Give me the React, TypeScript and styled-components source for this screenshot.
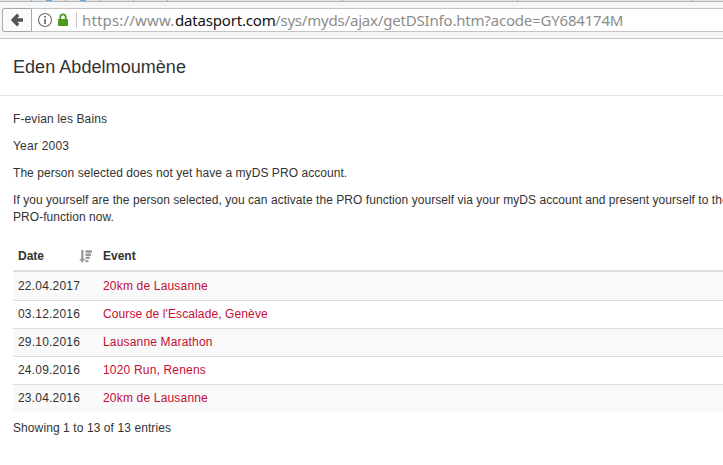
import React from "react";
import styled, { createGlobalStyle } from "styled-components";

const GlobalStyle = createGlobalStyle`
  * { box-sizing: border-box; }
  html, body { margin: 0; overflow: hidden; background: #fff; }
  body { font: 12px/17px "Liberation Sans", Arial, sans-serif; color: #333; }
`;
const Window = styled.div`width: 723px; height: 465px; overflow: hidden;`;
const TabStrip = styled.div`
  display: flex; height: 2px; background: #e3e4e5; border-bottom: 1px solid #b3b4b6;
`;
const Tab = styled.div<{ $w: number }>`
  flex: none; width: ${p => p.$w}px; height: 1px; border-right: 1px solid #aaa;
`;
const Favicon = styled.div`width: 6px; height: 1px; margin-left: 14px; background: #5ba7de;`;
const Toolbar = styled.div`
  height: 37px; padding: 6px 0 6px 2px; display: flex; background: #f5f6f7; border-bottom: 1px solid #c8c8c8;
`;
const BackButton = styled.button`
  width: 30px; height: 24px; padding: 0; display: flex; align-items: center; justify-content: center;
  background: #fbfbfb; border: 1px solid #a9a9a9; border-radius: 2px 0 0 2px;
`;
const AddressBar = styled.div`
  flex: 1; height: 24px; display: flex; align-items: center; padding-left: 5px;
  background: #fff; border: solid #c4c4c4; border-width: 1px 0;
`;
const Lock = styled.svg`margin-left: 4px;`;
const Separator = styled.div`width: 1px; height: 16px; margin: 0 5px 0 7px; background: #c8c8c8;`;
const UrlPart = styled.span<{ $w: number; $ls: number; $host?: boolean }>`
  flex: none; width: ${p => p.$w}px; white-space: nowrap;
  font: 15px/20px "Noto Sans", sans-serif; letter-spacing: ${p => p.$ls}px;
  color: ${p => (p.$host ? "#111" : "#8c8c8c")};
`;
const Header = styled.header`height: 57px; padding: 16px 13px 15px; border-bottom: 1px solid #e5e5e5;`;
const Title = styled.h4`margin: 0; font-size: 18px; font-weight: 400; line-height: 25px; letter-spacing: 0.05px;`;
const Content = styled.main`padding: 15px 0 0 13px;`;
const Paragraph = styled.p<{ $ls?: number }>`
  margin: 0 0 10px; white-space: nowrap; letter-spacing: ${p => p.$ls ?? 0.05}px;
`;
const Table = styled.table`width: 740px; margin-top: 15px; border-collapse: separate; border-spacing: 0; table-layout: fixed;`;
const HeadCell = styled.th<{ $w?: number }>`
  width: ${p => (p.$w ? `${p.$w}px` : "auto")}; height: 31px; padding: 1px 5px 0;
  text-align: left; vertical-align: middle; border-bottom: 2px solid #ddd;
`;
const SortLabel = styled.div`display: flex; align-items: center; justify-content: space-between;`;
const Row = styled.tr`&:nth-child(odd) { background: #f9f9f9; }`;
const Cell = styled.td<{ $ls: number }>`
  height: 28px; padding: 5px; border-top: 1px solid #ddd; letter-spacing: ${p => p.$ls}px;
  tr:first-child > & { border-top-color: #f9f9f9; }
`;
const EventLink = styled.a`color: #c40d35; text-decoration: none;`;
const Summary = styled.div`padding-top: 8px; letter-spacing: 0.09px;`;

const tabs = [
  { w: 32, icon: false }, { w: 34, icon: true }, { w: 34, icon: true }, { w: 34, icon: false },
  { w: 34, icon: false }, { w: 175, icon: false }, { w: 175, icon: false }, { w: 174, icon: false },
];
const events = [
  { date: "22.04.2017", name: "20km de Lausanne", spacing: 0.18 },
  { date: "03.12.2016", name: "Course de l'Escalade, Genève", spacing: 0.11 },
  { date: "29.10.2016", name: "Lausanne Marathon", spacing: 0.17 },
  { date: "24.09.2016", name: "1020 Run, Renens", spacing: 0.18 },
  { date: "23.04.2016", name: "20km de Lausanne", spacing: 0.18 },
];

export default function App() {
  return (
    <Window>
      <GlobalStyle />
      <TabStrip>
        {tabs.map((t, i) => <Tab key={i} $w={t.w}>{t.icon && <Favicon />}</Tab>)}
      </TabStrip>
      <Toolbar>
        <BackButton aria-label="Back">
          <svg width="14" height="14" viewBox="0 0 14 14" fill="none" stroke="#555" strokeWidth="3.4">
            <path d="M8.2 1.8 3.2 7 8.2 12.2M3.5 7h9.5" />
          </svg>
        </BackButton>
        <AddressBar>
          <svg width="16" height="16" viewBox="0 0 16 16" fill="none" stroke="#6a6a6a">
            <circle cx="8" cy="8" r="6.5" strokeWidth="1.1" />
            <path d="M8 7v5M8 4v1.8" strokeWidth="1.7" />
          </svg>
          <Lock width="12" height="14" viewBox="0 0 12 14">
            <path d="M3.3 7V4a2.7 2.7 0 0 1 5.4 0v3" fill="none" stroke="#4c9a22" strokeWidth="1.8" />
            <rect x="1" y="6" width="10" height="7" rx=".7" fill="#4c9a22" />
          </Lock>
          <Separator />
          <UrlPart $w={93} $ls={0.17}>https://www.</UrlPart>
          <UrlPart $w={100} $ls={-0.18} $host>datasport.com</UrlPart>
          <UrlPart $w={348} $ls={-0.19}>/sys/myds/ajax/getDSInfo.htm?acode=GY684174M</UrlPart>
        </AddressBar>
      </Toolbar>
      <Header><Title>Eden Abdelmoumène</Title></Header>
      <Content>
        <Paragraph $ls={0.12}>F-evian les Bains</Paragraph>
        <Paragraph $ls={0.22}>Year 2003</Paragraph>
        <Paragraph $ls={0.06}>The person selected does not yet have a myDS PRO account.</Paragraph>
        <Paragraph>
          If you yourself are the person selected, you can activate the PRO function yourself via your myDS account and present yourself to the<br />
          PRO-function now.
        </Paragraph>
        <Table>
          <thead>
            <tr>
              <HeadCell $w={85}>
                <SortLabel>
                  Date
                  <svg width="14" height="13" viewBox="0 0 14 13" fill="#999">
                    <path d="M2.2 0h2.3v9h2L3.3 12.8.2 9h2zM6.5 .3h6.5v2.4H6.5zM6.5 3.5h5.5v2.4H6.5zM6.5 6.7h4.3v2.4H6.5zM6.5 9.9h3v2.3h-3z" />
                  </svg>
                </SortLabel>
              </HeadCell>
              <HeadCell>Event</HeadCell>
            </tr>
          </thead>
          <tbody>
            {events.map(({ date, name, spacing }) => (
              <Row key={date}>
                <Cell $ls={0.2}>{date}</Cell>
                <Cell $ls={spacing}><EventLink>{name}</EventLink></Cell>
              </Row>
            ))}
          </tbody>
        </Table>
        <Summary>Showing 1 to 13 of 13 entries</Summary>
      </Content>
    </Window>
  );
}
